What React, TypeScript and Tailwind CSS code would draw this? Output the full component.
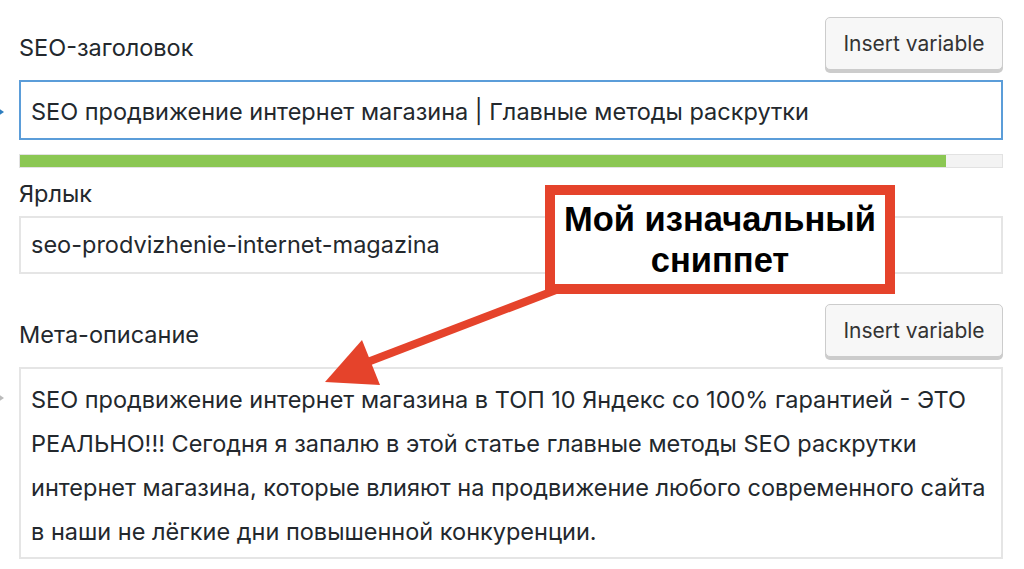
import React from 'react';

const font = { fontFamily: 'Inter, "Liberation Sans", Arial, sans-serif' };

const InsertButton: React.FC = () => (
  <button className="h-[53px] w-[178px] rounded-[5px] border border-[#cccccc] bg-[#f7f7f7] text-[21px] text-[#333] shadow-[0_3px_0_#cccccc]">
    Insert variable
  </button>
);

export default function App() {
  return (
    <div className="relative h-[569px] w-[1024px] overflow-hidden bg-white text-[#23282d]" style={font}>
      <div className="flex flex-col pl-[19px] pr-[21px] pt-[17px]">
        {/* SEO title */}
        <div className="flex items-end justify-between">
          <div className="pb-[5px] text-[23.5px] leading-[34px]">SEO-заголовок</div>
          <InsertButton />
        </div>
        <div className="relative mt-[10px]">
          <span className="absolute left-[-22px] top-[27px] h-0 w-0 border-y-[5px] border-l-[7px] border-y-transparent border-l-[#2e7ebf]" />
          <div className="flex h-[60px] items-center border-2 border-[#5b9dd9] px-[10px] pt-[3px] text-[23.5px]">
            SEO продвижение интернет магазина | Главные методы раскрутки
          </div>
        </div>
        <div className="mt-[14px] h-[14px] border border-[#e2e2e2] bg-[#f3f3f3]">
          <div className="h-full w-[94.3%] bg-[#8bc753]" />
        </div>

        {/* slug */}
        <div className="mt-[10px] text-[23.5px] leading-[32px]">Ярлык</div>
        <div className="mt-[6px] flex h-[58px] items-center border-2 border-[#e5e5e5] px-[10px] text-[23.5px]">
          seo-prodvizhenie-internet-magazina
        </div>

        {/* meta description */}
        <div className="mt-[30px] flex items-end justify-between">
          <div className="pb-[5px] text-[23.5px] leading-[34px]">Мета-описание</div>
          <InsertButton />
        </div>
        <div className="relative mt-[10px]">
          <span className="absolute left-[-22px] top-[26px] h-0 w-0 border-y-[5px] border-l-[7px] border-y-transparent border-l-[#bbbbbb]" />
          <div className="h-[192px] border-2 border-[#e5e5e5] px-[10px] pt-[9px] text-[23.5px] leading-[44px]">
            SEO продвижение интернет магазина в ТОП 10 Яндекс со 100% гарантией - ЭТО РЕАЛЬНО!!! Сегодня я запалю в этой статье главные методы SEO раскрутки интернет магазина, которые влияют на продвижение любого современного сайта в наши не лёгкие дни повышенной конкуренции.
          </div>
        </div>
      </div>

      {/* annotation arrow */}
      <svg className="pointer-events-none absolute left-0 top-0" width="1024" height="569">
        <line x1="556" y1="290" x2="352" y2="368" stroke="#e5432b" strokeWidth="8" />
        <polygon points="325,382 362,340 380,385" fill="#e5432b" />
      </svg>

      {/* callout */}
      <div className="absolute left-[545px] top-[185px] flex h-[109px] w-[350px] flex-col items-center justify-center border-[10px] border-[#e5432b] bg-white text-[34.5px] font-bold leading-[41px] text-black" style={{ fontFamily: '"Liberation Sans", Arial, sans-serif' }}>
        <span>Мой изначальный</span>
        <span>сниппет</span>
      </div>
    </div>
  );
}
